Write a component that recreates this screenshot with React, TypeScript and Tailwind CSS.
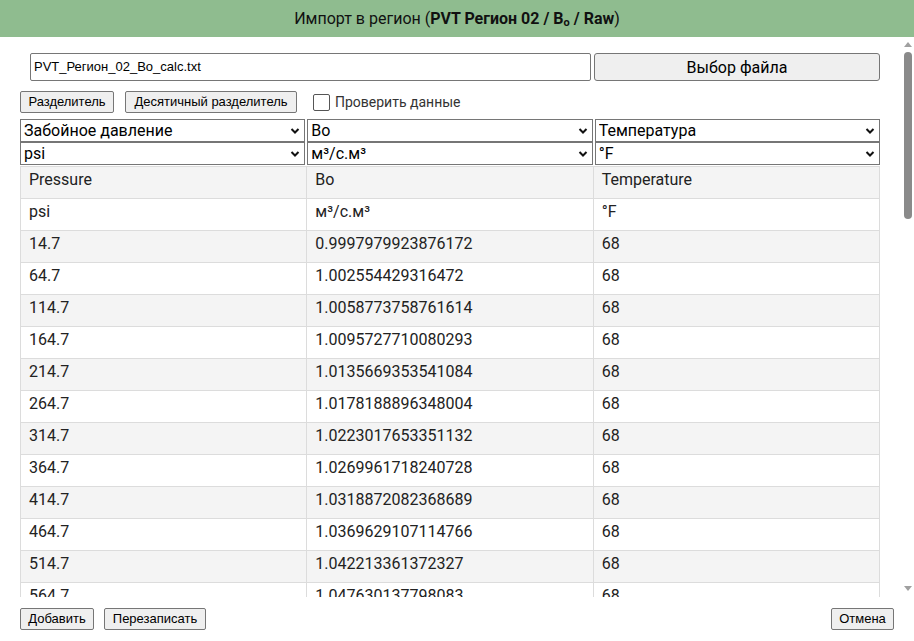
import React from 'react'

const rows = [
  ['14.7', '0.9997979923876172', '68'],
  ['64.7', '1.002554429316472', '68'],
  ['114.7', '1.0058773758761614', '68'],
  ['164.7', '1.0095727710080293', '68'],
  ['214.7', '1.0135669353541084', '68'],
  ['264.7', '1.0178188896348004', '68'],
  ['314.7', '1.0223017653351132', '68'],
  ['364.7', '1.0269961718240728', '68'],
  ['414.7', '1.0318872082368689', '68'],
  ['464.7', '1.0369629107114766', '68'],
  ['514.7', '1.042213361372327', '68'],
  ['564.7', '1.047630137798083', '68'],
]

const Chevron = () => (
  <svg width="10" height="7" viewBox="0 0 10 7" className="pointer-events-none absolute right-[5px] top-1/2 -translate-y-1/2">
    <path d="M1.5 1.5 L5 5 L8.5 1.5" fill="none" stroke="#111" strokeWidth="2" />
  </svg>
)

const Select = ({ value }: { value: string }) => (
  <div className="relative">
    <select
      defaultValue={value}
      className="block h-[23px] w-full appearance-none border border-[#767676] bg-white pl-[3px] text-[16px] leading-[20px] text-black outline-none"
    >
      <option>{value}</option>
    </select>
    <Chevron />
  </div>
)

const SmallButton = ({ children, className = '' }: { children: React.ReactNode; className?: string }) => (
  <button
    className={`h-[22px] rounded-[2px] border border-[#767676] bg-[#efefef] px-[6px] text-[13px] leading-[18px] text-black font-['Liberation_Sans',Arial,sans-serif] ${className}`}
  >
    {children}
  </button>
)

const Cell = ({ children }: { children: React.ReactNode }) => (
  <td className="border border-[#dcdcdc] pl-[8px] pt-[1px] align-top leading-[24px]">{children}</td>
)

export default function App() {
  return (
    <div className="flex h-[641px] w-[914px] flex-col overflow-hidden bg-white font-['Roboto',sans-serif] text-[#111]">
      <div className="flex h-[37px] shrink-0 items-center justify-center bg-[#8fbc8f] text-[16px]">
        <span>
          Импорт в регион (
          <b>
            PVT Регион 02 / B<sub className="text-[11px]">o</sub> / Raw
          </b>
          )
        </span>
      </div>

      <div className="flex min-h-0 flex-1">
        <div className="min-w-0 flex-1 overflow-hidden pl-[20px] pr-[22px] pt-[16px]">
          <div className="flex h-[28px] gap-[3px]">
            <div className="ml-[10px] flex flex-1 items-center rounded-[2px] border border-[#767676] pl-[3px] font-['Liberation_Sans',Arial,sans-serif] text-[13px] text-black">
              PVT_Регион_02_Bo_calc.txt
            </div>
            <button className="w-[286px] rounded-[3px] border border-[#767676] bg-[#efefef] pt-[1px] text-[16px] text-black">
              Выбор файла
            </button>
          </div>

          <div className="mt-[11px] flex h-[20px] items-center">
            <SmallButton className="h-[20px] w-[94px] leading-[16px]">Разделитель</SmallButton>
            <SmallButton className="ml-[11px] h-[20px] w-[172px] leading-[16px]">Десятичный разделитель</SmallButton>
            <label className="ml-[16px] flex items-center gap-[5px] text-[14px] text-[#333]">
              <span className="block h-[17px] w-[17px] rounded-[2px] border border-[#555] bg-white" />
              Проверить данные
            </label>
          </div>

          <div className="mt-[7px] grid grid-cols-3 gap-x-[2px]">
            <Select value="Забойное давление" />
            <Select value="Bo" />
            <Select value="Температура" />
            <Select value="psi" />
            <Select value="м³/с.м³" />
            <Select value="°F" />
          </div>

          <table className="mt-[1px] w-full table-fixed border-collapse text-[16px] text-[#222]">
            <tbody>
              <tr className="h-[32px] bg-[#f4f4f4]">
                <Cell>Pressure</Cell>
                <Cell>Bo</Cell>
                <Cell>Temperature</Cell>
              </tr>
              <tr className="h-[32px] bg-white">
                <Cell>psi</Cell>
                <Cell>м³/с.м³</Cell>
                <Cell>°F</Cell>
              </tr>
              {rows.map((r, i) => (
                <tr key={r[0]} className={`h-[32px] ${i % 2 === 0 ? 'bg-[#f4f4f4]' : 'bg-white'}`}>
                  {r.map((c, j) => (
                    <Cell key={j}>{c}</Cell>
                  ))}
                </tr>
              ))}
            </tbody>
          </table>
        </div>

        {/* vertical scrollbar */}
        <div className="flex w-[12px] shrink-0 flex-col items-center bg-white">
          <svg width="8" height="5" viewBox="0 0 8 5" className="mt-[5px]">
            <path d="M0 5 L4 0 L8 5 Z" fill="#a0a0a0" />
          </svg>
          <div className="mt-[5px] h-[167px] w-[8px] rounded-full bg-[#8a8a8a]" />
          <div className="flex-1" />
          <svg width="8" height="5" viewBox="0 0 8 5" className="mb-[6px]">
            <path d="M0 0 L8 0 L4 5 Z" fill="#a0a0a0" />
          </svg>
        </div>
      </div>

      <div className="flex h-[44px] shrink-0 items-center px-[20px]">
        <SmallButton className="w-[74px]">Добавить</SmallButton>
        <SmallButton className="ml-[10px] w-[102px]">Перезаписать</SmallButton>
        <div className="flex-1" />
        <SmallButton className="w-[63px]">Отмена</SmallButton>
      </div>
    </div>
  )
}
